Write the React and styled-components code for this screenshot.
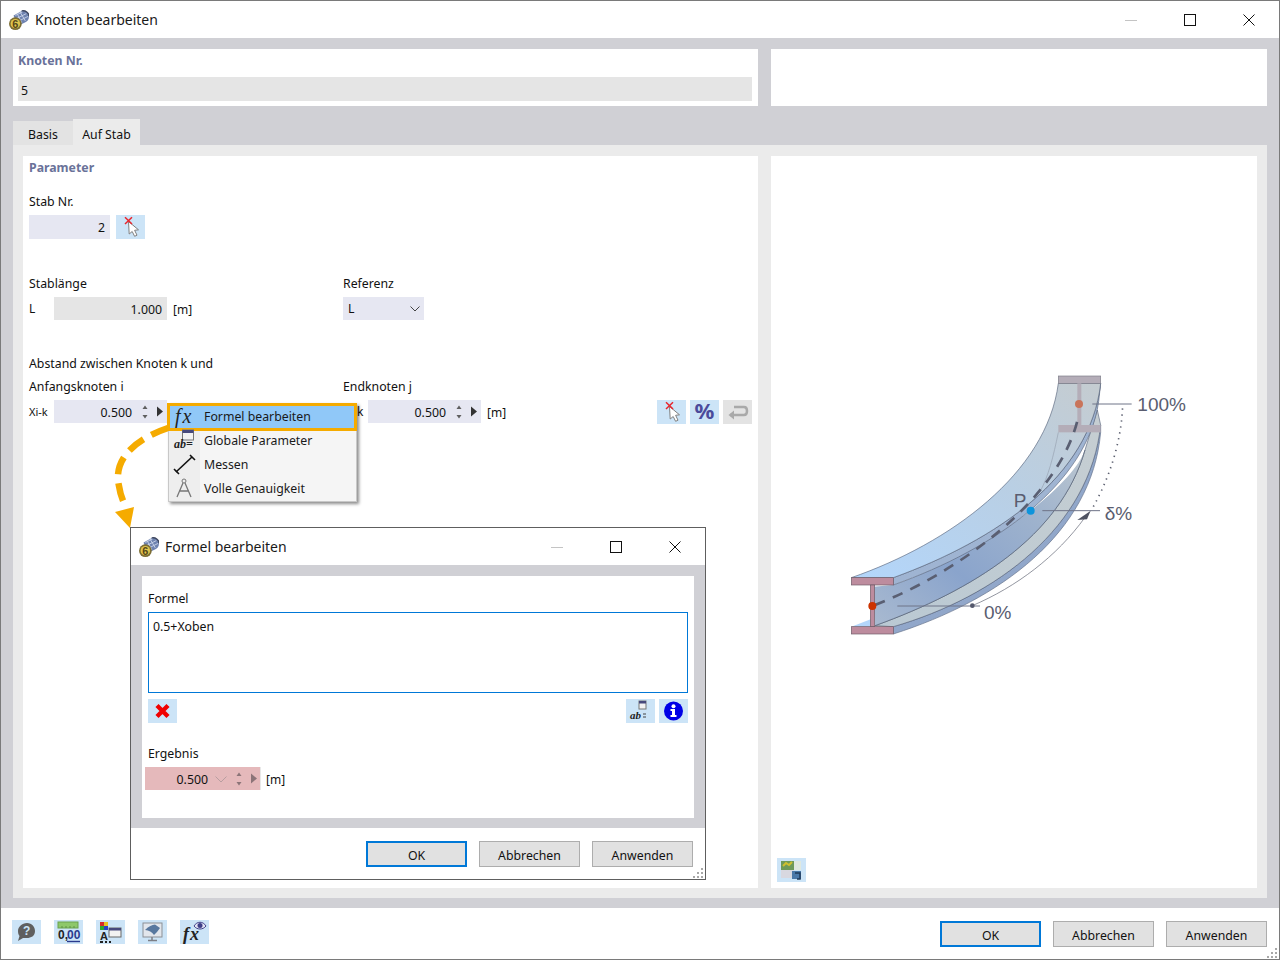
import React from 'react'
import styled, { createGlobalStyle } from 'styled-components'

const GlobalStyle = createGlobalStyle`
  html, body {
    margin: 0;
    padding: 0;
    background: #fff;
  }
  * {
    box-sizing: border-box;
  }
`

const Window = styled.div`
  position: relative;
  width: 1280px;
  height: 960px;
  display: flex;
  flex-direction: column;
  border: 1px solid #7a7a7a;
  background: #d0d0d5;
  color: #111;
  font-family: 'Noto Sans', 'Open Sans', sans-serif;
  font-size: 12.3px;
  line-height: 18px;
  overflow: hidden;
`

const TitleBar = styled.div`
  flex: none;
  height: 37px;
  display: flex;
  align-items: center;
  background: #fff;
  padding-left: 8px;
`

const TitleText = styled.span`
  margin-left: 6px;
  font-size: 14px;
  color: #1a1a1a;
`

const Controls = styled.div`
  margin-left: auto;
  margin-right: 1px;
  display: flex;
  height: 100%;
`

const ControlBox = styled.div`
  width: 59px;
  height: 100%;
  display: flex;
  align-items: center;
  justify-content: center;
`

const Main = styled.div`
  flex: 1;
  display: flex;
  flex-direction: column;
  padding: 11px 12px 10px;
  min-height: 0;
`

const TopRow = styled.div`
  flex: none;
  height: 57px;
  display: flex;
  gap: 13px;
`

const NodePanel = styled.div`
  width: 745px;
  background: #fff;
  padding: 2px 6px 0 5px;
`

const EmptyPanel = styled.div`
  flex: 1;
  background: #fff;
`

const Heading = styled.div`
  font-weight: 700;
  color: #6a7299;
  height: 18px;
  padding-top: 1px;
`

const NodeField = styled.div`
  margin-top: 8px;
  height: 24px;
  background: #e5e5e5;
  padding: 4px 0 0 3px;
  display: flex;
  align-items: center;
`

const TabRow = styled.div`
  flex: none;
  height: 26px;
  margin-top: 13px;
  display: flex;
  align-items: flex-end;
`

const Tab = styled.div`
  height: ${(p) => (p.$active ? 26 : 24)}px;
  width: ${(p) => (p.$active ? 67 : 60)}px;
  background: ${(p) => (p.$active ? '#ebebeb' : '#e3e3e3')};
  display: flex;
  align-items: center;
  justify-content: center;
  padding-top: ${(p) => (p.$active ? 5 : 3)}px;
`

const TabBody = styled.div`
  flex: 1;
  min-height: 0;
  background: #ebebeb;
  padding: 11px 10px 10px;
  display: flex;
  gap: 13px;
`

const FormPanel = styled.div`
  width: 735px;
  background: #fff;
  padding: 2px 6px 0;
`

const PreviewPanel = styled.div`
  flex: 1;
  background: #fff;
  padding: 204px 0 6px 69px;
  display: flex;
  flex-direction: column;
`

const PreviewAction = styled.div`
  margin-top: auto;
  margin-left: -63px;
`

const Label = styled.div`
  height: 18px;
  padding-top: 1px;
  margin-top: ${(p) => p.$top || 0}px;
  margin-bottom: ${(p) => p.$bottom || 0}px;
  white-space: nowrap;
`

const TwoCols = styled.div`
  display: grid;
  grid-template-columns: 314px 1fr;
`

const Inline = styled.div`
  display: flex;
  align-items: center;
  height: ${(p) => p.$h || 23}px;
`

const Prefix = styled.span`
  width: ${(p) => p.$w || 25}px;
  margin-left: ${(p) => p.$left || 0}px;
  padding-top: 1px;
  font-size: ${(p) => p.$size || 12}px;
`

const Unit = styled.span`
  margin-left: 6px;
  padding-top: 2px;
  font-size: 12px;
`

const Field = styled.div`
  position: relative;
  width: ${(p) => p.$w}px;
  height: 100%;
  background: ${(p) => p.$bg || '#e6e7f2'};
  display: flex;
  align-items: center;
  justify-content: flex-end;
  padding-top: 2px;
  padding-right: ${(p) => p.$pr || 5}px;
`

const Spin = styled.svg`
  position: absolute;
  right: 0;
  top: 0;
`

const FadedChevron = styled.svg`
  position: absolute;
  right: 33px;
  top: 9px;
`

const SelectBox = styled.div`
  width: 81px;
  height: 100%;
  background: #e6e7f2;
  display: flex;
  align-items: center;
  justify-content: space-between;
  padding: 0 4px 0 5px;
`

const IconButton = styled.div`
  flex: none;
  width: 29px;
  height: 24px;
  background: ${(p) => p.$bg || '#cce4f7'};
  display: flex;
  align-items: center;
  justify-content: center;
  color: #4b4b9b;
  font-size: 22px;
  font-weight: 700;
  padding-bottom: ${(p) => (p.$glyph ? 3 : 0)}px;
  margin-left: ${(p) => p.$left || 0}px;
`

const ToolGroup = styled.div`
  margin-left: auto;
  display: flex;
  gap: 4px;
`

const Footer = styled.div`
  flex: none;
  height: ${(p) => p.$h}px;
  background: #fff;
  display: flex;
  align-items: flex-start;
  padding: ${(p) => p.$top}px 12px 0 11px;
`

const LeftTools = styled.div`
  display: flex;
  gap: 13px;
`

const Buttons = styled.div`
  margin-left: auto;
  margin-top: ${(p) => p.$top || 0}px;
  display: flex;
  gap: 12px;
`

const Button = styled.div`
  width: 101px;
  height: 26px;
  padding-top: 4px;
  background: #e1e1e1;
  border: ${(p) => (p.$primary ? '2px solid #0078d7' : '1px solid #adadad')};
  display: flex;
  align-items: center;
  justify-content: center;
`

const Grip = styled.svg`
  position: absolute;
  right: 2px;
  bottom: 1px;
`

const Menu = styled.div`
  position: absolute;
  left: 167px;
  top: 402px;
  width: 189px;
  height: 99px;
  background: linear-gradient(90deg, #eeeeee 31px, #f5f5f5 31px);
  border: 1px solid #c8c8c8;
  box-shadow: 2px 2px 3px rgba(0, 0, 0, 0.45);
  padding-top: 1px;
`

const MenuItem = styled.div`
  position: relative;
  height: 24px;
  display: flex;
  align-items: center;
  padding-left: 35px;
  color: #1a1a1a;
`

const MenuHighlight = styled.div`
  position: absolute;
  left: -2px;
  top: -2px;
  right: -1px;
  bottom: -2px;
  background: #90c8f8;
  border: 3px solid #f5ab00;
`

const MenuIcon = styled.svg`
  position: absolute;
  left: 1px;
  top: 0;
`

const MenuText = styled.span`
  position: relative;
`

const ArrowLayer = styled.svg`
  position: absolute;
  left: 100px;
  top: 415px;
  pointer-events: none;
`

const Dialog = styled.div`
  position: absolute;
  left: 129px;
  top: 526px;
  width: 576px;
  height: 353px;
  display: flex;
  flex-direction: column;
  background: #d0d0d5;
  border: 1px solid #5e5e5e;
`

const DialogBody = styled.div`
  flex: 1;
  min-height: 0;
  padding: 11px 11px 10px;
  display: flex;
`

const DialogPanel = styled.div`
  flex: 1;
  background: #fff;
  padding: 13px 6px 0;
`

const Formula = styled.div`
  height: 81px;
  border: 1px solid #0078d7;
  padding: 5px 4px;
  margin-bottom: 6px;
`

const ResultField = styled(Field)`
  margin-left: -3px;
  box-shadow: 1px 0 0 #e8e8e8;

  ${Spin} {
    right: -1px;
  }
`

const Diagram = () => (
  <svg width="360" height="290" viewBox="0 0 1080 870">
    <defs>
      <linearGradient id="flangeTop" x1="0" y1="1" x2="1" y2="0">
        <stop offset="0" stopColor="#b3d6fb" />
        <stop offset="0.55" stopColor="#b9cfe4" />
        <stop offset="1" stopColor="#c5ccd0" />
      </linearGradient>
      <linearGradient id="webFill" x1="0" y1="1" x2="1" y2="0">
        <stop offset="0" stopColor="#a9bad0" />
        <stop offset="0.35" stopColor="#8aa4cc" />
        <stop offset="0.7" stopColor="#9fb3cd" />
        <stop offset="1" stopColor="#bcc7d0" />
      </linearGradient>
      <linearGradient id="lowerTop" x1="0" y1="1" x2="1" y2="0">
        <stop offset="0" stopColor="#bac9d3" />
        <stop offset="1" stopColor="#c6ced2" />
      </linearGradient>
    </defs>
    <path d="M160 800C470 710 750 500 782 195L782 217C755 520 480 720 160 822Z" fill="#91a7ca" stroke="#62708a" strokeWidth="2" />
    <path d="M34 800L92 778L92 800Z" fill="#b3d6fb" />
    <path d="M105 797C400 690 660 530 735 270L772 150L782 195C750 500 470 710 160 800Z" fill="url(#lowerTop)" stroke="#5d6a80" strokeWidth="2" />
    <path d="M100 680L160 675C470 562 700 370 735 270C660 530 400 690 105 797Z" fill="url(#webFill)" />
    <path d="M105 797C400 690 660 530 735 270" fill="none" stroke="#4f5a70" strokeWidth="2" />
    <path d="M160 653C470 540 750 350 782 70L776 125C740 370 470 565 160 675Z" fill="#9fb4d2" stroke="#5d6a80" strokeWidth="2" />
    <path d="M34 653C330 550 620 340 655 70L782 70C750 350 470 540 160 653Z" fill="url(#flangeTop)" stroke="#5d6a80" strokeWidth="2" />
    <path d="M655 217C640 290 625 350 600 395" fill="none" stroke="#97a1b0" strokeWidth="2" />
    <rect x="655" y="48" width="127" height="22" fill="#b4adb8" stroke="#7c7c88" strokeWidth="2" />
    <rect x="712" y="70" width="12" height="125" fill="#b4adb8" />
    <rect x="655" y="195" width="127" height="22" fill="#b4adb8" />
    <rect x="34" y="653" width="126" height="22" fill="#bd8c9e" stroke="#6c5a66" strokeWidth="2" />
    <rect x="91" y="675" width="13" height="125" fill="#bd8c9e" stroke="#6c5a66" strokeWidth="2" />
    <rect x="34" y="800" width="126" height="22" fill="#bd8c9e" stroke="#6c5a66" strokeWidth="2" />
    <path d="M105 735C350 640 660 420 715 170" fill="none" stroke="#5a5f72" strokeWidth="8" strokeDasharray="32 26" />
    <path d="M172 738L420 738" stroke="#6f7488" strokeWidth="3" />
    <path d="M607 452L780 452" stroke="#6f7488" strokeWidth="3" />
    <path d="M757 132L875 132" stroke="#6f7488" strokeWidth="3" />
    <path d="M397 737C530 680 650 590 735 472" fill="none" stroke="#5c6070" strokeWidth="2" />
    <path d="M712 480L752 452L741 478Z" fill="#4f5362" />
    <path d="M760 440C810 350 845 240 848 135" fill="none" stroke="#5c6070" strokeWidth="5" strokeDasharray="4 14" />
    <circle cx="397" cy="737" r="7" fill="#54586c" />
    <circle cx="97" cy="738" r="12" fill="#cc3300" />
    <circle cx="717" cy="132" r="12" fill="#c9745a" />
    <circle cx="572" cy="452" r="12" fill="#0d94dc" />
    <g fill="#5a5d70" fontFamily="'Liberation Sans', sans-serif" fontSize="57">
      <text x="892" y="152">100%</text>
      <text x="521" y="440">P</text>
      <text x="794" y="481">δ%</text>
      <text x="432" y="777">0%</text>
    </g>
  </svg>
)

const AppIcon = () => (
  <svg width="20" height="20" viewBox="0 0 22 22">
    <path d="M5 6L14 1C18 0 22 3 22 7C22 11 20 13 17 14L9 18Z" fill="#6f83b0" />
    <path d="M7 6L15 2M9 9L19 4M11 12L21 7M12 2L18 12M9 4L14 14" stroke="#c9d3e8" strokeWidth="1" />
    <path d="M14 1C18 0 22 3 22 7" fill="none" stroke="#3f4860" strokeWidth="1.5" />
    <circle cx="7" cy="15" r="7" fill="#7d6e34" />
    <circle cx="7" cy="15" r="5.2" fill="#e0c44c" />
    <text x="3.6" y="19.5" fontSize="12" fontWeight="700" fontFamily="'Liberation Sans', sans-serif" fill="#55471a">6</text>
  </svg>
)

const Minimize = () => (
  <svg width="12" height="12"><path d="M0 6.5H12" stroke="#c4c4c4" /></svg>
)

const Maximize = () => (
  <svg width="12" height="12"><rect x="0.5" y="0.5" width="11" height="11" fill="none" stroke="#111" /></svg>
)

const CloseX = () => (
  <svg width="12" height="12"><path d="M0.5 0.5L11.5 11.5M11.5 0.5L0.5 11.5" stroke="#111" /></svg>
)

const WindowControls = () => (
  <Controls>
    <ControlBox><Minimize /></ControlBox>
    <ControlBox><Maximize /></ControlBox>
    <ControlBox><CloseX /></ControlBox>
  </Controls>
)

const PickIcon = () => (
  <svg width="29" height="24" viewBox="0 0 29 24">
    <path d="M12.5 6.5L22.5 14.8L18.6 15.3L21 20.2L18.6 21.3L16.2 16.5L13.2 19Z" fill="#fff" stroke="#808080" />
    <path d="M9 2.2L16 9M16 2.2L9 9" stroke="#e8262d" strokeWidth="1.5" />
  </svg>
)

const ReturnIcon = () => (
  <svg width="29" height="24" viewBox="0 0 29 24">
    <path d="M11 7H21C25 7 25 15 21 15H7" fill="none" stroke="#a9a9a9" strokeWidth="2.5" />
    <path d="M11 10.5L5.5 15L11 19.5Z" fill="#a9a9a9" />
  </svg>
)

const RedX = () => (
  <svg width="29" height="24" viewBox="0 0 29 24">
    <path d="M9 6.5L20 17.5M20 6.5L9 17.5" stroke="#f00000" strokeWidth="4.4" />
  </svg>
)

const AbIcon = () => (
  <svg width="29" height="24" viewBox="0 0 29 24">
    <rect x="13" y="2" width="7" height="8" fill="#f2f2f2" stroke="#777" />
    <rect x="13" y="2" width="7" height="2.5" fill="#47497c" />
    <text x="4" y="20" fontSize="11" fontWeight="700" fontStyle="italic" fontFamily="'Liberation Serif', serif" fill="#222">ab</text>
    <path d="M17 15H20M17 18H20" stroke="#444" />
  </svg>
)

const InfoIcon = () => (
  <svg width="29" height="24" viewBox="0 0 29 24">
    <circle cx="14.5" cy="12" r="9.5" fill="#0000e6" />
    <circle cx="14.5" cy="7.2" r="2" fill="#fff" />
    <path d="M11.5 10H16V16H17.5V18H11.5V16H13V12H11.5Z" fill="#fff" />
  </svg>
)

const HelpIcon = () => (
  <svg width="29" height="24" viewBox="0 0 29 24">
    <path d="M15 3C20 3 23 7 23 11C23 16 19 18 15 18C13 18 11.5 18 11 18L6 21L7.5 16C6.5 15 6 13 6 11C6 7 10 3 15 3Z" fill="#5f5f5f" />
    <text x="11" y="15" fontSize="12" fontWeight="700" fontFamily="'Liberation Sans', sans-serif" fill="#cce4f7">?</text>
  </svg>
)

const DecimalsIcon = () => (
  <svg width="29" height="24" viewBox="0 0 29 24">
    <rect x="4" y="2" width="20" height="6" fill="#8ec86a" stroke="#6aa24e" />
    <path d="M8 6V8M12 6V8M16 6V8M20 6V8" stroke="#5f9247" />
    <text x="4" y="19" fontSize="12" fontFamily="'Liberation Sans', sans-serif" fill="#222">0,</text>
    <text x="13" y="19" fontSize="12" fontFamily="'Liberation Sans', sans-serif" fill="#2a3a8e">00</text>
    <path d="M13 21.5H26" stroke="#2a3a8e" strokeWidth="1.4" />
  </svg>
)

const ColorsIcon = () => (
  <svg width="29" height="24" viewBox="0 0 29 24">
    <rect x="4" y="2" width="4" height="4" fill="#d62a2a" />
    <rect x="8" y="2" width="4" height="4" fill="#e8c020" />
    <rect x="4" y="6" width="4" height="4" fill="#2fa52f" />
    <rect x="8" y="6" width="4" height="4" fill="#2a3ec8" />
    <rect x="13" y="8" width="12" height="9" fill="#f2f2f2" stroke="#666" />
    <rect x="13" y="8" width="12" height="2.5" fill="#47497c" />
    <text x="4" y="20" fontSize="11" fontWeight="700" fontFamily="'Liberation Sans', sans-serif" fill="#222">A</text>
    <path d="M4 22H7M9 22H11M13 22H15" stroke="#222" strokeWidth="2" />
  </svg>
)

const ScreenIcon = () => (
  <svg width="29" height="24" viewBox="0 0 29 24">
    <rect x="5" y="3" width="19" height="14" fill="#e2e6ec" stroke="#8b8f96" />
    <path d="M7 10C11 6 14 5 17 4.5L22 8C20 11 18 13 16 15C14 12 11 10.5 7 10Z" fill="#58789f" />
    <path d="M14 17V20M10 20.5H19" stroke="#7d7f86" strokeWidth="1.5" />
  </svg>
)

const FxEyeIcon = () => (
  <svg width="29" height="24" viewBox="0 0 29 24">
    <text x="3" y="20" fontSize="18" letterSpacing="1" fontStyle="italic" fontFamily="'Liberation Serif', serif" fill="#222">fx</text>
    <path d="M14 6C17 1 23 1 26 6C23 10 17 10 14 6Z" fill="#e4e4f4" stroke="#3f3f88" />
    <circle cx="20" cy="5.5" r="2.5" fill="#3f3f88" />
  </svg>
)

const ExportIcon = () => (
  <svg width="29" height="24" viewBox="0 0 29 24">
    <rect x="4" y="3" width="13" height="9" fill="#6e9a5a" />
    <path d="M6 8L9 5L12 7L15 4" stroke="#d0c030" strokeWidth="2" fill="none" />
    <rect x="17" y="3" width="7" height="9" fill="#dfe8e0" />
    <rect x="4" y="12" width="13" height="8" fill="#d8d8e0" />
    <rect x="15" y="13" width="9" height="8" fill="#4a78a8" />
    <path d="M18 15H23V21H20" stroke="#1f3a5a" fill="none" strokeWidth="1.5" />
  </svg>
)

const SpinArrows = ({ faded }) => (
  <Spin width="33" height="23" viewBox="0 0 33 23">
    <g fill={faded ? '#8c7478' : '#5f5f5f'}>
      <path d="M8.5 9L11 5.5L13.5 9Z" />
      <path d="M8.5 15L11 18.5L13.5 15Z" />
    </g>
    <path d="M23 6.5L29 11.5L23 16.5Z" fill={faded ? '#8c7478' : '#333'} />
  </Spin>
)

const GripDots = () => (
  <Grip width="10" height="10">
    <g fill="#a8a8a8">
      <rect x="8" y="0" width="2" height="2" />
      <rect x="4" y="4" width="2" height="2" />
      <rect x="8" y="4" width="2" height="2" />
      <rect x="0" y="8" width="2" height="2" />
      <rect x="4" y="8" width="2" height="2" />
      <rect x="8" y="8" width="2" height="2" />
    </g>
  </Grip>
)

export default function App() {
  return (
    <>
      <GlobalStyle />
      <Window>
        <TitleBar>
          <AppIcon />
          <TitleText>Knoten bearbeiten</TitleText>
          <WindowControls />
        </TitleBar>
        <Main>
          <TopRow>
            <NodePanel>
              <Heading>Knoten Nr.</Heading>
              <NodeField>5</NodeField>
            </NodePanel>
            <EmptyPanel />
          </TopRow>
          <TabRow>
            <Tab>Basis</Tab>
            <Tab $active>Auf Stab</Tab>
          </TabRow>
          <TabBody>
            <FormPanel>
              <Heading>Parameter</Heading>
              <Label $top={16} $bottom={5}>Stab Nr.</Label>
              <Inline $h={24}>
                <Field $w={81}>2</Field>
                <IconButton $left={6}><PickIcon /></IconButton>
              </Inline>
              <TwoCols>
                <Label $top={35} $bottom={5}>Stablänge</Label>
                <Label $top={35} $bottom={5}>Referenz</Label>
              </TwoCols>
              <TwoCols>
                <Inline>
                  <Prefix>L</Prefix>
                  <Field $w={113} $bg="#e5e5e5">1.000</Field>
                  <Unit>[m]</Unit>
                </Inline>
                <Inline>
                  <SelectBox>
                    L
                    <svg width="10" height="6"><path d="M0.5 0.5L5 5L9.5 0.5" fill="none" stroke="#444" /></svg>
                  </SelectBox>
                </Inline>
              </TwoCols>
              <Label $top={34}>Abstand zwischen Knoten k und</Label>
              <TwoCols>
                <Label $top={5} $bottom={5}>Anfangsknoten i</Label>
                <Label $top={5} $bottom={5}>Endknoten j</Label>
              </TwoCols>
              <TwoCols>
                <Inline>
                  <Prefix $size={11}>Xi-k</Prefix>
                  <Field $w={113} $pr={35}>0.500<SpinArrows /></Field>
                </Inline>
                <Inline>
                  <Prefix $w={11} $left={14}>k</Prefix>
                  <Field $w={113} $pr={35}>0.500<SpinArrows /></Field>
                  <Unit>[m]</Unit>
                  <ToolGroup>
                    <IconButton><PickIcon /></IconButton>
                    <IconButton $glyph>%</IconButton>
                    <IconButton $bg="#e3e3e3"><ReturnIcon /></IconButton>
                  </ToolGroup>
                </Inline>
              </TwoCols>
            </FormPanel>
            <PreviewPanel>
              <Diagram />
              <PreviewAction>
                <IconButton><ExportIcon /></IconButton>
              </PreviewAction>
            </PreviewPanel>
          </TabBody>
        </Main>
        <Footer $h={51} $top={12}>
          <LeftTools>
            <IconButton><HelpIcon /></IconButton>
            <IconButton><DecimalsIcon /></IconButton>
            <IconButton><ColorsIcon /></IconButton>
            <IconButton><ScreenIcon /></IconButton>
            <IconButton><FxEyeIcon /></IconButton>
          </LeftTools>
          <Buttons $top={1}>
            <Button $primary>OK</Button>
            <Button>Abbrechen</Button>
            <Button>Anwenden</Button>
          </Buttons>
        </Footer>
        <GripDots />

        <ArrowLayer width="80" height="120" viewBox="100 415 80 120">
          <path d="M167 427C140 436 111 455 118 485C119 492 121 498 124 504" fill="none" stroke="#f5ab00" strokeWidth="6.5" strokeDasharray="18 9" />
          <path d="M114 511L133 506L129 527Z" fill="#f5ab00" />
        </ArrowLayer>

        <Menu>
          <MenuItem>
            <MenuHighlight />
            <MenuIcon width="32" height="24">
              <text x="5" y="18" fontSize="20" letterSpacing="2" fontStyle="italic" fontFamily="'Liberation Serif', serif" fill="#222">fx</text>
            </MenuIcon>
            <MenuText>Formel bearbeiten</MenuText>
          </MenuItem>
          <MenuItem>
            <MenuIcon width="32" height="24">
              <rect x="12.5" y="1" width="11" height="10" fill="#f2f2f2" stroke="#777" />
              <rect x="12.5" y="1" width="11" height="3" fill="#47497c" />
              <text x="4" y="19" fontSize="12" fontWeight="700" fontStyle="italic" fontFamily="'Liberation Serif', serif" fill="#222">ab=</text>
            </MenuIcon>
            <MenuText>Globale Parameter</MenuText>
          </MenuItem>
          <MenuItem>
            <MenuIcon width="32" height="24">
              <path d="M6 19L22 4" stroke="#111" strokeWidth="1.6" />
              <path d="M4 16L9 21M20 2L25 7" stroke="#111" strokeWidth="1.6" />
            </MenuIcon>
            <MenuText>Messen</MenuText>
          </MenuItem>
          <MenuItem>
            <MenuIcon width="32" height="24">
              <circle cx="14" cy="4" r="2" fill="none" stroke="#777" />
              <path d="M13 6L7 20M15 6L21 20M9 14H19" stroke="#777" strokeWidth="1.3" fill="none" />
            </MenuIcon>
            <MenuText>Volle Genauigkeit</MenuText>
          </MenuItem>
        </Menu>

        <Dialog>
          <TitleBar>
            <AppIcon />
            <TitleText>Formel bearbeiten</TitleText>
            <WindowControls />
          </TitleBar>
          <DialogBody>
            <DialogPanel>
              <Label $bottom={5}>Formel</Label>
              <Formula>0.5+Xoben</Formula>
              <Inline $h={24}>
                <IconButton><RedX /></IconButton>
                <ToolGroup>
                  <IconButton><AbIcon /></IconButton>
                  <IconButton><InfoIcon /></IconButton>
                </ToolGroup>
              </Inline>
              <Label $top={21} $bottom={5}>Ergebnis</Label>
              <Inline>
                <ResultField $w={115} $bg="#e5b9bb" $pr={52}>
                  0.500
                  <FadedChevron width="12" height="7"><path d="M0.5 0.5L6 6L11.5 0.5" fill="none" stroke="#b99ea0" /></FadedChevron>
                  <SpinArrows faded />
                </ResultField>
                <Unit>[m]</Unit>
              </Inline>
            </DialogPanel>
          </DialogBody>
          <Footer $h={51} $top={13}>
            <Buttons>
              <Button $primary>OK</Button>
              <Button>Abbrechen</Button>
              <Button>Anwenden</Button>
            </Buttons>
          </Footer>
          <GripDots />
        </Dialog>
      </Window>
    </>
  )
}
